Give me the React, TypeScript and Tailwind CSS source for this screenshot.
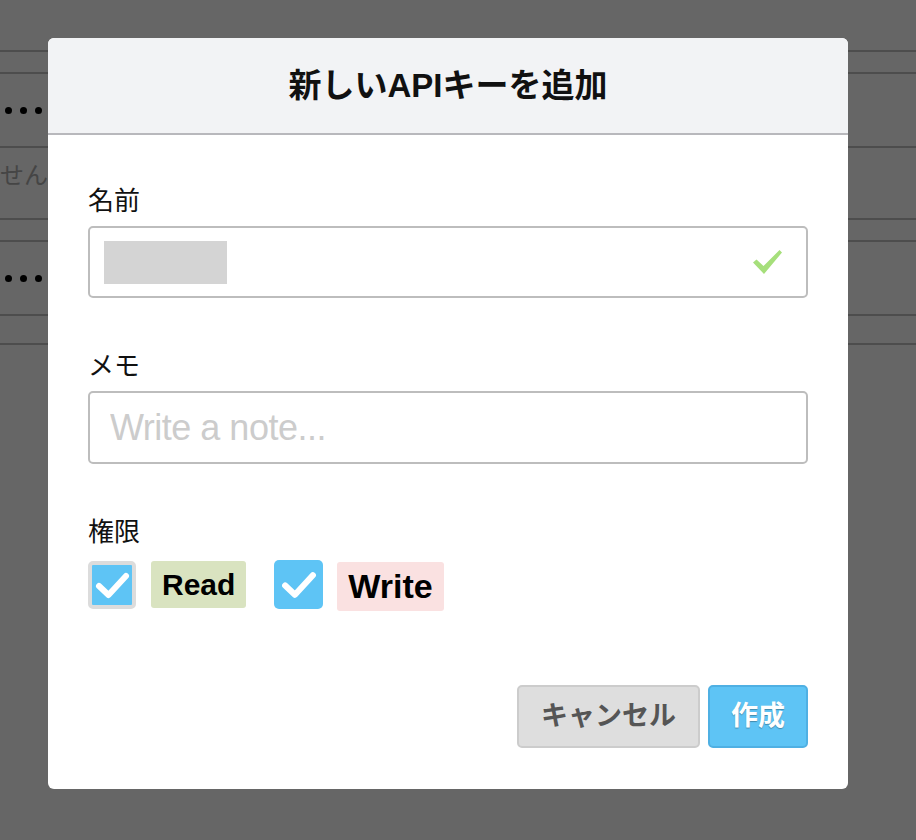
import React from 'react';

// page rows behind the overlay
const rows = [
  { h: 'h-[50px]', content: null },
  { h: 'h-[20px]', content: null },
  { h: 'h-[72px]', content: 'dots' },
  { h: 'h-[70px]', content: 'text' },
  { h: 'h-[20px]', content: null },
  { h: 'h-[72px]', content: 'dots' },
  { h: 'h-[27px]', content: null },
];

function Dots() {
  return (
    <div className="flex items-center gap-[8px] pl-[5px]">
      <span className="h-[7px] w-[7px] rounded-full bg-black" />
      <span className="h-[7px] w-[7px] rounded-full bg-black" />
      <span className="h-[7px] w-[7px] rounded-full bg-black" />
    </div>
  );
}

function CheckMark() {
  return (
    <svg viewBox="0 0 40 40" className="h-full w-full">
      <path d="M7 21 L16.5 30 L34 11" fill="none" stroke="white" strokeWidth="6" strokeLinecap="round" strokeLinejoin="round" />
    </svg>
  );
}

export default function App() {
  return (
    <div className="relative h-[840px] w-[916px] overflow-hidden bg-[#666666] font-['Liberation_Sans','Noto_Sans_CJK_JP',sans-serif]">
      {rows.map((r, i) => (
        <div key={i} className={`${r.h} box-content flex items-center border-b-2 border-[#4d4d4d]`}>
          {r.content === 'dots' && <Dots />}
          {r.content === 'text' && <span className="-mt-[14px] text-[24px] text-[#454545]">せん</span>}
        </div>
      ))}

      {/* modal */}
      <div className="absolute left-[48px] top-[38px] w-[800px] overflow-hidden rounded-[6px] bg-white">
        <div className="flex h-[97px] items-center justify-center border-b-2 border-[#b8b8bc] bg-[#f2f3f5]">
          <h2 className="text-[33px] font-bold leading-none text-[#111111]">新しいAPIキーを追加</h2>
        </div>

        <div className="px-10 pb-[41px] pt-[48px]">
          <label className="mb-[7px] block text-[26px] leading-[36px] text-[#111111]">名前</label>
          <div className="flex h-[72px] items-center justify-between rounded-[5px] border-2 border-[#bdbdbd] pl-[14px] pr-[24px]">
            <div className="h-[43px] w-[123px] bg-[#d4d4d4]" />
            <svg viewBox="0 0 29 24" className="h-[24px] w-[29px]">
              <path d="M0 12.5 L3.5 9.5 L10.5 16 L26.5 0 L29 2.5 L11 24 Z" fill="#a6df7b" />
            </svg>
          </div>

          <label className="mb-[7px] mt-[50px] block text-[26px] leading-[36px] text-[#111111]">メモ</label>
          <input
            type="text"
            placeholder="Write a note..."
            className="block h-[73px] w-full rounded-[5px] border-2 border-[#bdbdbd] px-[20px] text-[36px] tracking-[-0.5px] outline-none placeholder:text-[#cccccc]"
          />

          <label className="mb-[8px] mt-[50px] block text-[26px] leading-[36px] text-[#111111]">権限</label>
          <div className="flex items-center">
            <div className="h-[48px] w-[48px] rounded-[5px] border-4 border-[#dcdcdc] bg-[#5ec4f5]">
              <CheckMark />
            </div>
            <span className="ml-[15px] flex h-[47px] items-center rounded-[3px] bg-[#d9e3c0] px-[11px] text-[30px] font-bold text-black">Read</span>
            <div className="ml-[28px] h-[49px] w-[49px] rounded-[5px] bg-[#5ec4f5] p-[4px]">
              <CheckMark />
            </div>
            <span className="ml-[14px] mt-[4px] flex h-[49px] items-center rounded-[3px] bg-[#fae1e1] px-[11px] text-[34px] font-bold text-black">Write</span>
          </div>

          <div className="mt-[74px] flex justify-end gap-[8px]">
            <button className="h-[63px] w-[183px] rounded-[5px] border-2 border-[#cccccc] bg-[#dedede] text-[27px] font-bold text-[#555555]">
              キャンセル
            </button>
            <button className="h-[63px] w-[100px] rounded-[5px] border-2 border-[#4fb0e3] bg-[#5ec4f5] text-[27px] font-bold text-white [text-shadow:0_1px_1px_rgba(0,0,0,0.3)]">
              作成
            </button>
          </div>
        </div>
      </div>
    </div>
  );
}
